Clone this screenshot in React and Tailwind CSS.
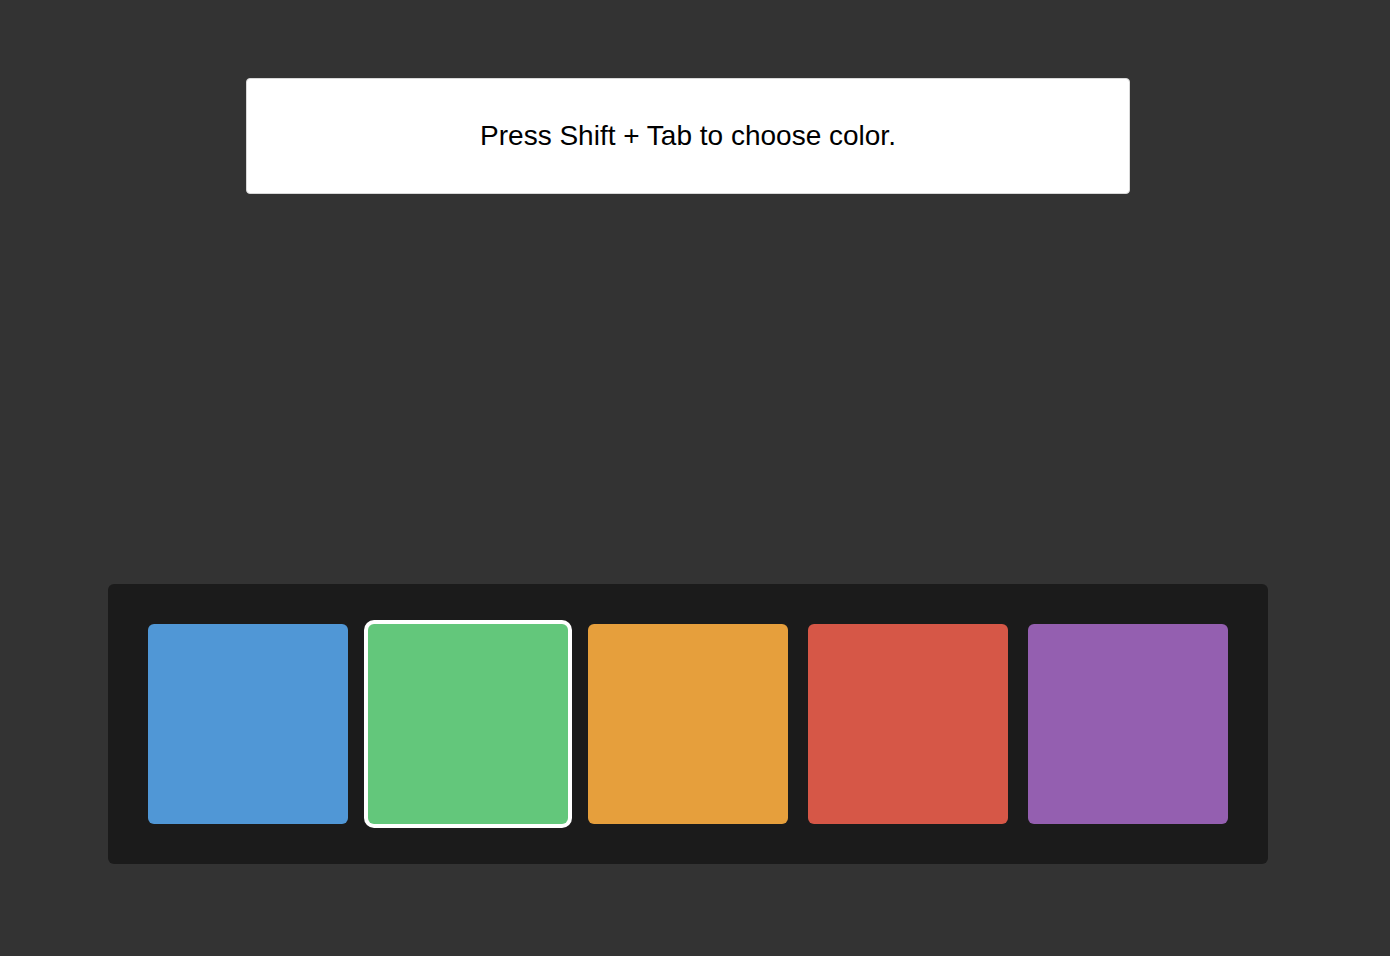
import React, { useState } from 'react';

const colors = [
    { name: 'blue', cls: 'bg-[#5097d6]' },
    { name: 'green', cls: 'bg-[#63c77b]' },
    { name: 'orange', cls: 'bg-[#e69f3c]' },
    { name: 'red', cls: 'bg-[#d65747]' },
    { name: 'purple', cls: 'bg-[#945fb0]' },
];

const App = () => {
    const [selected, setSelected] = useState('green');

    return (
        <div className="min-h-screen w-full bg-[#333333] font-['Liberation_Sans',Arial,sans-serif]">
            <div className="w-[1376px] flex flex-col items-center">
                <div className="mt-[78px] w-[884px] h-[116px] bg-white border border-[#d8d8d8] rounded-[4px] flex items-center justify-center">
                    <p className="text-[28px] text-black leading-none">Press Shift + Tab to choose color.</p>
                </div>

                <div className="mt-[390px] w-[1160px] h-[280px] bg-[#1b1b1b] rounded-[6px] p-[40px] flex gap-[20px]">
                    {colors.map((c) => (
                        <button
                            key={c.name}
                            onClick={() => setSelected(c.name)}
                            className={`w-[200px] h-[200px] rounded-[6px] ${c.cls} ${selected === c.name ? 'ring-4 ring-white' : ''}`}
                            aria-label={c.name}
                        />
                    ))}
                </div>
            </div>
        </div>
    );
};

export default App;
